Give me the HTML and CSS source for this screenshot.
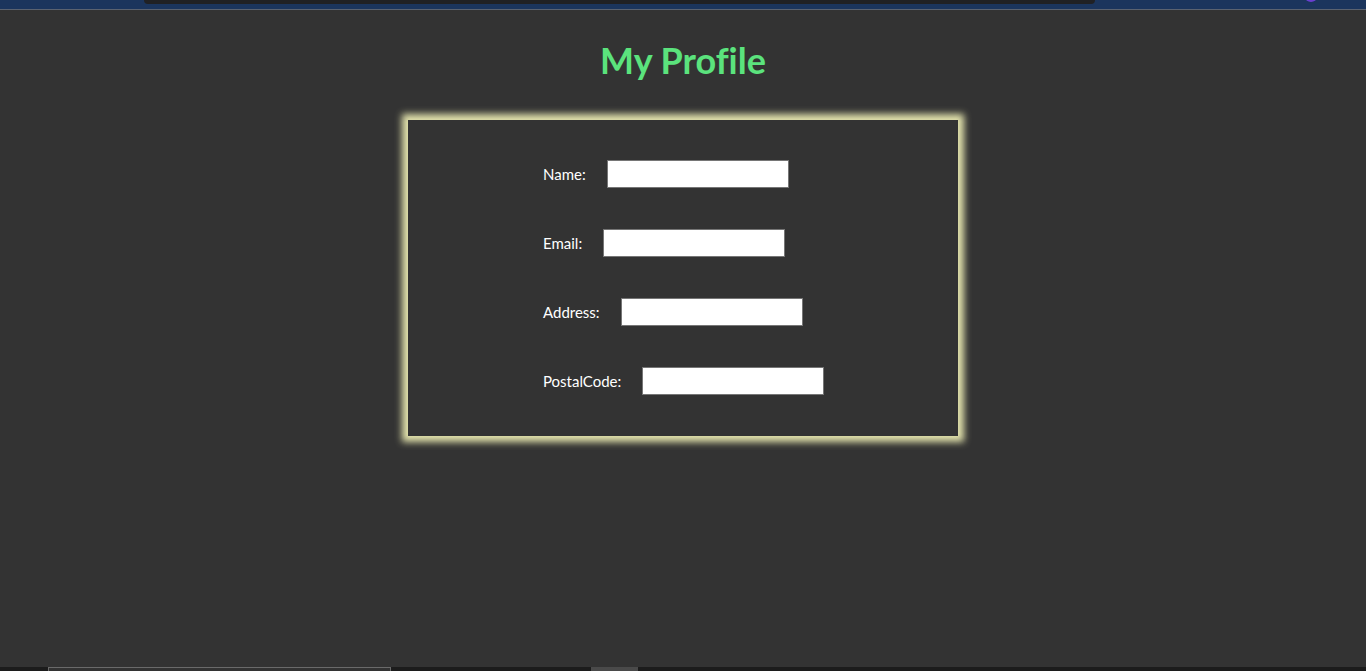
FILE: index.html
```html
<!DOCTYPE html>
<html lang="en">
<head>
<meta charset="utf-8">
<title>My Profile</title>
<link rel="stylesheet" href="styles.css">
</head>
<body>
<div class="chrome-top">
  <div class="pill"></div>
  <div class="dot"></div>
</div>
<main class="page">
  <h1 class="title">My Profile</h1>
  <form class="card">
    <div class="row"><label class="lbl" for="name">Name:</label><input class="field" id="name" type="text"></div>
    <div class="row"><label class="lbl" for="email">Email:</label><input class="field" id="email" type="text"></div>
    <div class="row"><label class="lbl" for="address">Address:</label><input class="field" id="address" type="text"></div>
    <div class="row"><label class="lbl" for="postal">PostalCode:</label><input class="field" id="postal" type="text"></div>
  </form>
</main>
<div class="chrome-bottom">
  <div class="tab"></div>
  <div class="thumb"></div>
</div>
</body>
</html>
```
FILE: styles.css
```css
html, body {
  margin: 0;
  padding: 0;
  height: 100%;
}
body {
  background: #333333;
  font-family: "Trebuchet MS", "Lato", "Open Sans", sans-serif;
  color: #ffffff;
  display: flex;
  flex-direction: column;
  overflow: hidden;
}
.chrome-top {
  position: relative;
  height: 9px;
  background: #1b355d;
  border-bottom: 1px solid #5a6270;
  flex: none;
}
.pill {
  position: absolute;
  left: 144px;
  width: 951px;
  top: 0;
  height: 4px;
  background: #202124;
  border-radius: 0 0 8px 8px;
}
.dot {
  position: absolute;
  left: 1305px;
  top: -8px;
  width: 12px;
  height: 10px;
  border-radius: 50%;
  background: #6a3fd0;
}
.page {
  flex: 1;
  display: flex;
  flex-direction: column;
  align-items: center;
}
.title {
  margin: 30px 0 0;
  height: 80px;
  font-size: 36px;
  font-weight: bold;
  color: #5be37d;
  line-height: 40px;
  font-variant-ligatures: none;
}
.card {
  box-sizing: border-box;
  width: 550px;
  height: 316px;
  padding: 40px 0 0 135px;
  background: #333333;
  box-shadow: 0 0 7px 6px #e2e2ac;
  display: flex;
  flex-direction: column;
  gap: 41px;
}
.row {
  display: flex;
  align-items: center;
  height: 28px;
}
.lbl {
  font-size: 15px;
  margin-right: 21px;
  color: #ffffff;
}
.field {
  box-sizing: border-box;
  width: 182px;
  height: 28px;
  border: 1px solid #767676;
  background: #ffffff;
  padding: 0 3px;
  margin: 0;
}
.chrome-bottom {
  position: relative;
  height: 4px;
  background: #1c1c1c;
  flex: none;
}
.tab {
  position: absolute;
  left: 48px;
  top: 0;
  width: 341px;
  height: 4px;
  border: 1px solid #6a6a6a;
  border-bottom: none;
  background: #333333;
}
.thumb {
  position: absolute;
  left: 591px;
  top: 0;
  width: 47px;
  height: 4px;
  background: #4a4a4a;
}
```
